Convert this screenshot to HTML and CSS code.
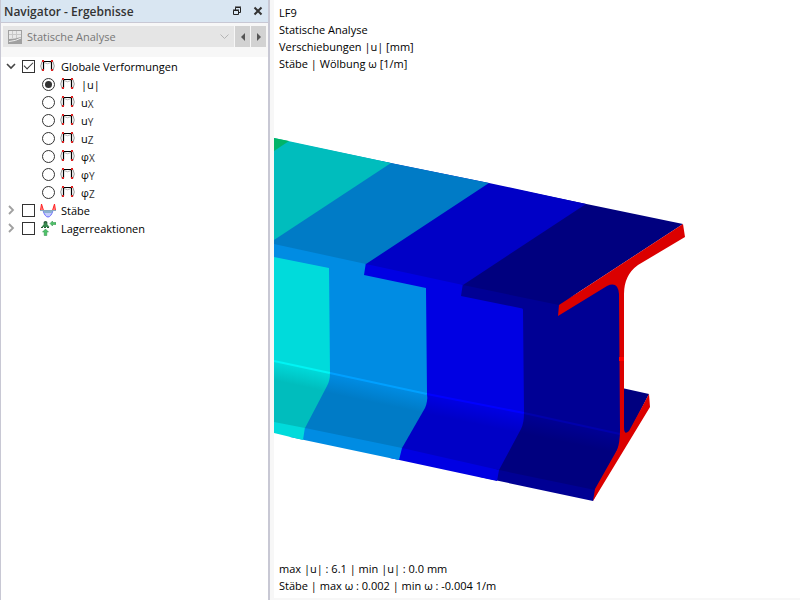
FILE: index.html
```html
<!DOCTYPE html>
<html lang="de">
<head>
    <meta charset="UTF-8">
    <meta name="viewport" content="width=device-width, initial-scale=1.0">
    <title>Navigator - Ergebnisse</title>
    <link rel="stylesheet" href="styles.css">
</head>
<body>
    <!-- Shared icon for all deformation entries -->
    <svg class="sprite" aria-hidden="true">
        <symbol id="icon-frame" viewBox="0 0 16 16">
            <path d="M2 3.500Q-.5 8 2 12.500M13 3.500Q15.500 8 13 12.500" fill="none" stroke="#999" />
            <path d="M4 4.500Q7.500 7 11 4.500" fill="none" stroke="#bbb" />
            <path d="M3.500 12V3.500H11.500V12" fill="none" stroke="#000" stroke-width="1.200" />
            <path d="M2 2h2v2H2zM11 2h2v2h-2zM2 11h2v2H2zM11 11h2v2h-2z" fill="#d22" />
        </symbol>
    </svg>

    <div class="app">
        <aside class="navigator">
            <header class="titlebar">
                <h1>Navigator - Ergebnisse</h1>
                <button type="button" class="title-btn" aria-label="Abdocken">
                    <svg width="10" height="10" viewBox="0 0 10 10" fill="none" stroke="#222">
                        <path d="M3.500 4V1.500H8.500V6.500H7M3 1h6M1.500 4.500h5v4h-5zM1 4h6" />
                    </svg>
                </button>
                <button type="button" class="title-btn" aria-label="Schließen">
                    <svg width="10" height="10" viewBox="0 0 10 10" fill="none" stroke="#333" stroke-width="2">
                        <path d="M1.500 1.500L8.500 8.500M8.500 1.500L1.500 8.500" />
                    </svg>
                </button>
            </header>

            <div class="toolbar">
                <div class="combo">
                    <svg class="combo-icon" width="14" height="14" viewBox="0 0 14 14">
                        <path d="M0 0h14v14H0z" fill="#a0a0a0" />
                        <path d="M1 1h12v6Q7 9 1 9z" fill="#e8e8e8" />
                        <path d="M1 4.500h12M4.500 1v7M8.500 1v7" stroke="#c8c8c8" />
                        <path d="M1 11.500Q8 11 13 8" fill="none" stroke="#eee" />
                    </svg>
                    <select aria-label="Analyseart" disabled>
                        <option>Statische Analyse</option>
                    </select>
                    <svg class="combo-arrow" width="9" height="6" viewBox="0 0 9 6" fill="none" stroke="#b4b4b4">
                        <path d="M.5.5L4.500 4.500L8.500.5" />
                    </svg>
                </div>
                <button type="button" class="step-btn" aria-label="Zurück">
                    <svg width="4" height="8" viewBox="0 0 4 8"><path d="M4 0v8L0 4z" fill="#555" /></svg>
                </button>
                <button type="button" class="step-btn" aria-label="Weiter">
                    <svg width="4" height="8" viewBox="0 0 4 8"><path d="M0 0v8L4 4z" fill="#555" /></svg>
                </button>
            </div>

            <ul class="tree">
                <li>
                    <div class="row">
                        <button type="button" class="toggle" aria-label="Zuklappen" aria-expanded="true">
                            <svg width="10" height="10" viewBox="0 0 10 10" fill="none" stroke="#444" stroke-width="1.600"><path d="M1 3L5 7L9 3" /></svg>
                        </button>
                        <input type="checkbox" id="global" checked>
                        <label for="global"><svg class="icon"><use href="#icon-frame" /></svg>Globale Verformungen</label>
                    </div>
                    <ul>
                        <li class="row child"><input type="radio" name="def" id="u" checked><label for="u"><svg class="icon"><use href="#icon-frame" /></svg>|u|</label></li>
                        <li class="row child"><input type="radio" name="def" id="ux"><label for="ux"><svg class="icon"><use href="#icon-frame" /></svg><span>u<small>X</small></span></label></li>
                        <li class="row child"><input type="radio" name="def" id="uy"><label for="uy"><svg class="icon"><use href="#icon-frame" /></svg><span>u<small>Y</small></span></label></li>
                        <li class="row child"><input type="radio" name="def" id="uz"><label for="uz"><svg class="icon"><use href="#icon-frame" /></svg><span>u<small>Z</small></span></label></li>
                        <li class="row child"><input type="radio" name="def" id="phix"><label for="phix"><svg class="icon"><use href="#icon-frame" /></svg><span>φ<small>X</small></span></label></li>
                        <li class="row child"><input type="radio" name="def" id="phiy"><label for="phiy"><svg class="icon"><use href="#icon-frame" /></svg><span>φ<small>Y</small></span></label></li>
                        <li class="row child"><input type="radio" name="def" id="phiz"><label for="phiz"><svg class="icon"><use href="#icon-frame" /></svg><span>φ<small>Z</small></span></label></li>
                    </ul>
                </li>
                <li class="row">
                    <button type="button" class="toggle" aria-label="Aufklappen" aria-expanded="false">
                        <svg width="10" height="10" viewBox="0 0 10 10" fill="none" stroke="#a0a0a0" stroke-width="1.800"><path d="M3 1L7 5L3 9" /></svg>
                    </button>
                    <input type="checkbox" id="members">
                    <label for="members">
                        <svg class="icon" viewBox="0 0 16 16">
                            <path d="M3 8.500H13Q11 15 8 15T3 8.500z" fill="#c4ccfc" stroke="#66f" />
                            <path d="M3 8h10l-1 3H4z" fill="#8ab0d0" />
                            <path d="M1.500 2L3.500 8.500H.5zM14.500 2L12.500 8.500H15.500z" fill="#f88" stroke="#f22" />
                            <path d="M0 8.500h16" stroke="#8aa8c0" />
                        </svg>Stäbe
                    </label>
                </li>
                <li class="row">
                    <button type="button" class="toggle" aria-label="Aufklappen" aria-expanded="false">
                        <svg width="10" height="10" viewBox="0 0 10 10" fill="none" stroke="#a0a0a0" stroke-width="1.800"><path d="M3 1L7 5L3 9" /></svg>
                    </button>
                    <input type="checkbox" id="supports">
                    <label for="supports">
                        <svg class="icon" viewBox="0 0 16 16">
                            <circle cx="5.500" cy="3" r="2" fill="#285a38" />
                            <path d="M5.500 2L9.500 7H1.500z" fill="#3a8a50" />
                            <path d="M1 7.500h9" stroke="#285a38" stroke-dasharray="2 1" />
                            <path d="M5.500 9L8.500 12H6.800v3.500H4.200V12H2.500zM10 3.500L12.500 1v1.500H16v2h-3.500V6z" fill="#4cc468" stroke="#2c8a44" stroke-width=".5" />
                        </svg>Lagerreaktionen
                    </label>
                </li>
            </ul>
        </aside>

        <main class="view">
            <p class="info">
                LF9<br>
                Statische Analyse<br>
                Verschiebungen |u| [mm]<br>
                Stäbe | Wölbung ω [1/m]
            </p>

            <!-- I-section beam with banded deformation colours -->
            <svg class="model" viewBox="274 72 526 488" preserveAspectRatio="xMinYMin meet" role="img" aria-label="Verformter Träger">
                <defs>
                    <linearGradient id="fillet-teal" gradientUnits="userSpaceOnUse" x1="300" y1="366" x2="296" y2="385">
                        <stop offset="0" stop-color="#00dbdb" /><stop offset="1" stop-color="#00bdbd" />
                    </linearGradient>
                    <linearGradient id="fillet-blue" gradientUnits="userSpaceOnUse" x1="380" y1="384" x2="376" y2="403">
                        <stop offset="0" stop-color="#008ce3" /><stop offset="1" stop-color="#007bc6" />
                    </linearGradient>
                    <linearGradient id="fillet-royal" gradientUnits="userSpaceOnUse" x1="475" y1="404" x2="471" y2="423">
                        <stop offset="0" stop-color="#0000e3" /><stop offset="1" stop-color="#0000c6" />
                    </linearGradient>
                    <linearGradient id="fillet-navy" gradientUnits="userSpaceOnUse" x1="572" y1="424" x2="568" y2="443">
                        <stop offset="0" stop-color="#000094" /><stop offset="1" stop-color="#00007f" />
                    </linearGradient>
                </defs>

                <!-- Web and flange edges, each band drawn over the one to its right -->
                <path d="M440 278L463 283L559 303L622 270V440L593 501L480 477z" fill="#000094" />
                <path d="M350 256L463 283L461 296L520 308Q523 308 523 310L524 413Q524 423 521 429L499 470L497 481L390 458z" fill="#0000e3" />
                <path d="M274 242L366 262L364 275L426 288L427 394Q428 401 425 408L402 448L399 460L290 437L274 400z" fill="#008ce3" />
                <path d="M274 257L329 268L330 373Q330 381 327 386L305 427L303 440L274 433z" fill="#00dbdb" />

                <!-- Bottom flange -->
                <path d="M427 394L524 413L621 434L618 449L595 490L499 470L440 450z" fill="url(#fillet-navy)" />
                <path d="M330 373L427 394L524 413Q524 423 521 429L499 470L402 448z" fill="url(#fillet-royal)" />
                <path d="M300 367L330 373L427 394Q428 401 425 408L402 448L305 428z" fill="url(#fillet-blue)" />
                <path d="M274 361L330 373Q330 381 327 386L305 428L274 422z" fill="url(#fillet-teal)" />
                <g fill="none" stroke-width="2">
                    <path d="M274 361L330 373" stroke="#00f4f4" />
                    <path d="M330 373L427 394" stroke="#00a0ff" />
                    <path d="M427 394L524 413" stroke="#0000ff" />
                    <path d="M524 413L620 434" stroke="#0000ac" />
                </g>
                <path d="M622 388L649 394L628 435L622 434z" fill="#00007f" />

                <!-- Top flange -->
                <path d="M480 182L683 224L559 305L463 285L440 270z" fill="#00007f" />
                <path d="M380 161L489 183L586 204L463 285L366 264L350 250z" fill="#0000c6" />
                <path d="M280 140L391 163L489 183L366 264L274 244V200z" fill="#007bc6" />
                <path d="M274 138L391 163L274 240z" fill="#00bdbd" />
                <path d="M274 138L289 141L274 151z" fill="#00b468" />

                <!-- Cut section -->
                <path d="M683 224L685 237L638 265Q624 275 624 294V427Q624 436 629 431L649 394L650 407L593 501L595 489L617 450Q620 443 620 430L619 294Q618 281 607 286L558 316L559 305z" fill="#db0000" />
                <path d="M619 357h5v4h-5z" fill="#ff0000" />
            </svg>

            <p class="info">
                max |u| : 6.1 | min |u| : 0.0 mm<br>
                Stäbe | max ω : 0.002 | min ω : -0.004 1/m
            </p>
        </main>
    </div>
</body>
</html>
```
FILE: styles.css
```css
* {
    box-sizing: border-box;
}
body {
    margin: 0;
    font-family: "Open Sans", "Noto Sans", sans-serif;
    font-size: 11px;
    color: #000;
    background-color: #f7f7f7;
}
button {
    border: none;
    padding: 0;
    background: none;
    display: flex;
    align-items: center;
    justify-content: center;
}
ul {
    list-style: none;
    margin: 0;
    padding: 0;
}
.sprite {
    display: none;
}
.app {
    display: grid;
    grid-template-columns: 270px 1fr;
    gap: 4px;
    height: 100vh;
}

/* Navigator */
.navigator {
    display: flex;
    flex-direction: column;
    border-left: 1px solid #c8c8d4;
    border-right: 2px solid #c8c8d4;
    background-color: #fff;
}
.titlebar {
    display: flex;
    align-items: center;
    gap: 3px;
    height: 23px;
    padding: 0 1px 0 3px;
    background-color: #d9e6f2;
    border-bottom: 1px solid #c8c8d4;
}
.titlebar h1 {
    flex: 1;
    margin: 0;
    font-size: 12px;
    font-weight: 600;
    color: #333;
}
.title-btn {
    width: 18px;
    height: 18px;
}
.toolbar {
    display: flex;
    gap: 1px;
    height: 34px;
    padding: 3px 2px 10px;
    background-color: #f7f7f7;
}
.combo {
    display: flex;
    flex: 1;
    align-items: center;
    gap: 5px;
    padding: 0 5px;
    background-color: #e5e5e5;
}
.combo select {
    flex: 1;
    appearance: none;
    border: none;
    padding: 0;
    background: none;
    font: inherit;
    color: #777;
    opacity: 1;
}
.step-btn {
    width: 15px;
    background-color: #d2d2d2;
}
.row {
    display: flex;
    align-items: center;
    height: 18px;
    padding-left: 5px;
}
.row.child {
    padding-left: 41px;
}
.row label {
    display: flex;
    align-items: center;
    margin-left: 5px;
}
.row small {
    font-size: 10px;
    line-height: 1;
    vertical-align: -1px;
    color: #333;
}
.toggle {
    width: 10px;
    height: 10px;
    margin-right: 6px;
}
.icon {
    width: 16px;
    height: 16px;
    margin-right: 5px;
}
input {
    appearance: none;
    display: grid;
    place-items: center;
    width: 13px;
    height: 13px;
    margin: 0;
    border: 1px solid #333;
    background-color: #fff;
}
input[type="radio"] {
    border-radius: 50%;
}
input[type="radio"]:checked::before {
    content: "";
    width: 7px;
    height: 7px;
    border-radius: 50%;
    background-color: #333;
}
input[type="checkbox"]:checked::before {
    content: "";
    width: 8px;
    height: 4px;
    margin-bottom: 3px;
    border-left: 1px solid #333;
    border-bottom: 1px solid #333;
    transform: rotate(-45deg);
}

/* Model view */
.view {
    display: flex;
    flex-direction: column;
    min-width: 0;
    margin-bottom: 2px;
    padding: 4px 0;
    background-color: #fff;
}
.info {
    margin: 0;
    padding-left: 5px;
    line-height: 17px;
}
.model {
    display: block;
    flex: 1;
    width: 100%;
    min-height: 0;
}
```
